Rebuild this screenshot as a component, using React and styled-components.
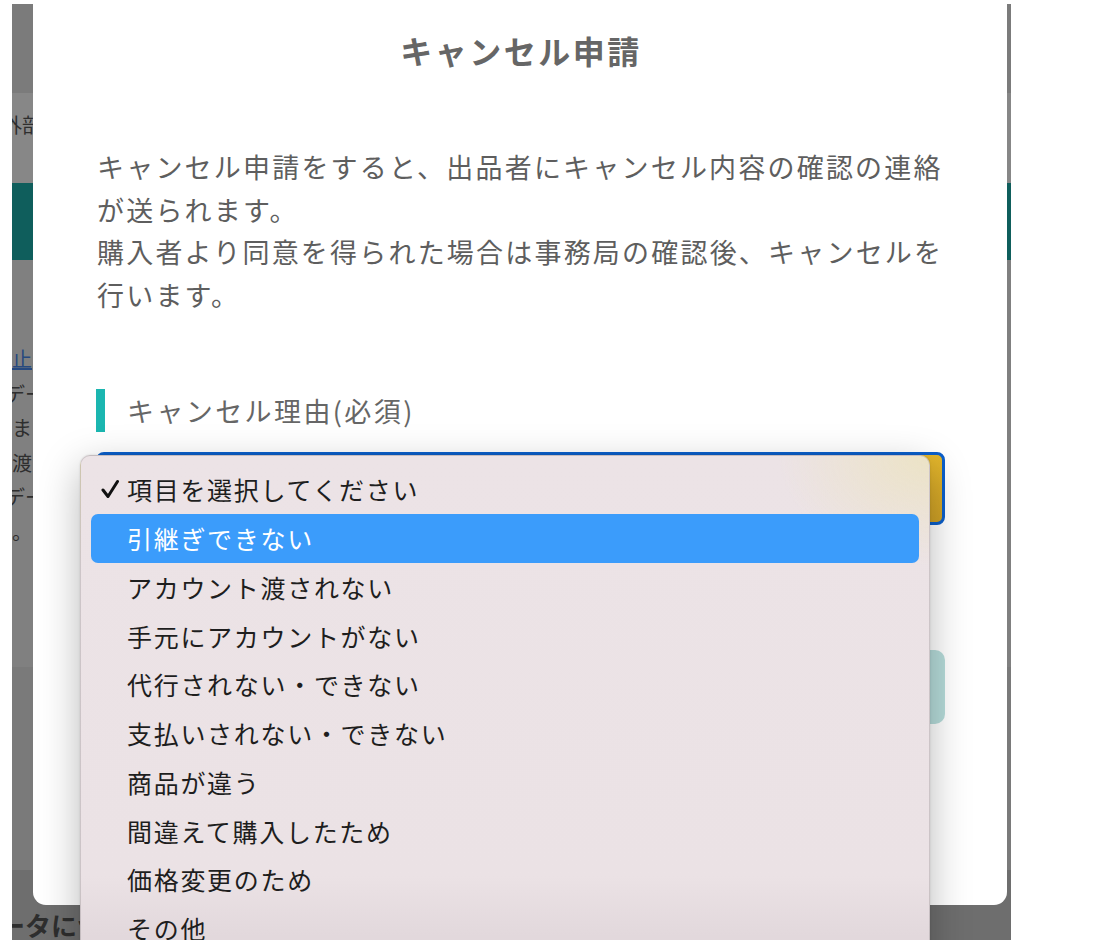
import React from "react";
import styled, { createGlobalStyle } from "styled-components";

const GlobalStyle = createGlobalStyle`
  html, body {
    margin: 0;
    padding: 0;
    background: #ffffff;
    overflow: hidden;
  }
  body {
    font-family: "Noto Sans CJK JP", "Noto Sans", sans-serif;
  }
`;

const Screen = styled.div`
  position: relative;
  width: 1100px;
  height: 940px;
  overflow: hidden;
  background: #ffffff;
`;

// dimmed page behind the modal
const Page = styled.div`
  display: flex;
  flex-direction: column;
  margin: 4px 0 0 12px;
  width: 999px;
  height: 936px;
  overflow: hidden;
  background: #808080;
`;

const Band = styled.div`
  flex: ${(props) => (props.$h ? `0 0 ${props.$h}px` : "1 1 auto")};
  background: ${(props) => props.$bg};
  padding-top: ${(props) => props.$pt || 0}px;
  box-sizing: border-box;
`;

const DimText = styled.div`
  font-size: ${(props) => props.$size || 20}px;
  line-height: ${(props) => props.$lh || 34.5}px;
  font-weight: ${(props) => (props.$bold ? 700 : 400)};
  color: #2e2e2e;
  white-space: nowrap;
  text-indent: ${(props) => props.$indent || 0}px;
`;

const DimLink = styled.span`
  color: #27497f;
  text-decoration: underline;
`;

const Modal = styled.div`
  position: absolute;
  left: 33px;
  top: 0;
  width: 974px;
  height: 905px;
  box-sizing: border-box;
  padding: 28px 62px 0 64px;
  background: #ffffff;
  border-radius: 0 0 13px 13px;
  display: flex;
  flex-direction: column;
`;

const Title = styled.h2`
  margin: 0;
  font-size: 32px;
  line-height: 45px;
  font-weight: 700;
  letter-spacing: 2.5px;
  text-align: center;
  color: #666666;
`;

const Lead = styled.p`
  margin: 73px 0 0;
  font-size: 27px;
  line-height: 42.5px;
  letter-spacing: 2.2px;
  color: #5e5e5e;
`;

const FieldLabel = styled.div`
  margin-top: 73px;
  height: 43px;
  display: flex;
  align-items: center;
  border-left: 9px solid #1bb6b0;
  padding-left: 22px;
  margin-left: -1px;
  font-size: 27px;
  letter-spacing: 2.4px;
  color: #666666;
`;

const SelectBox = styled.div`
  margin-top: 20px;
  height: 73px;
  box-sizing: border-box;
  border: 3px solid #0b5fcb;
  border-radius: 8px;
  margin-left: -1px;
  background: linear-gradient(to bottom, #e3b62c, #cfa126);
`;

const SubmitButton = styled.div`
  margin-top: 125px;
  height: 74px;
  border-radius: 10px;
  background: #b6dcda;
`;

const Menu = styled.div`
  position: absolute;
  left: 80px;
  top: 455px;
  width: 850px;
  height: 520px;
  box-sizing: border-box;
  padding: 9px 10px 0;
  border: 1px solid rgba(0, 0, 0, 0.13);
  border-radius: 10px;
  background:
    radial-gradient(ellipse 150px 110px at 100% 0, rgba(236, 227, 196, 0.95), rgba(236, 227, 196, 0) 100%),
    linear-gradient(to bottom, #ece3e6 0, #ebe2e5 420px, #e2d8dc 480px);
  box-shadow: 0 12px 40px rgba(0, 0, 0, 0.28), 0 0 2px rgba(0, 0, 0, 0.15);
`;

const MenuItem = styled.div`
  height: 48.75px;
  display: flex;
  align-items: center;
  padding-left: 10px;
  border-radius: 7px;
  font-size: 25px;
  letter-spacing: 1.7px;
  color: ${(props) => (props.$active ? "#ffffff" : "#1e1e1e")};
  background: ${(props) => (props.$active ? "#3b9cfb" : "transparent")};
`;

const CheckSlot = styled.span`
  flex: 0 0 26px;
  display: flex;
  align-items: center;
`;

const Check = () => (
  <svg width="18" height="20" viewBox="0 0 18 20">
    <path
      d="M2 11 L7 17.5 L16.5 2.5"
      fill="none"
      stroke="#111"
      strokeWidth="3"
      strokeLinecap="round"
      strokeLinejoin="round"
    />
  </svg>
);

const reasons = [
  "項目を選択してください",
  "引継ぎできない",
  "アカウント渡されない",
  "手元にアカウントがない",
  "代行されない・できない",
  "支払いされない・できない",
  "商品が違う",
  "間違えて購入したため",
  "価格変更のため",
  "その他",
];

export default function App() {
  return (
    <Screen>
      <GlobalStyle />
      <Page>
        <Band $h={89} $bg="#7b7b7b" />
        <Band $h={90} $bg="#878787" $pt={18}>
          <DimText $lh={28} $indent={-10}>外部サービスとの連携</DimText>
        </Band>
        <Band $h={77} $bg="#0f5e5c" />
        <Band $h={407} $bg="#808080" $pt={82}>
          <DimText>
            <DimLink>止</DimLink>
          </DimText>
          <DimText $indent={-7}>データの引継ぎについて</DimText>
          <DimText>ます。</DimText>
          <DimText>渡</DimText>
          <DimText $indent={-7}>データの確認</DimText>
          <DimText>。</DimText>
        </Band>
        <Band $h={203} $bg="#7a7a7a" />
        <Band $bg="#6e6e6e" $pt={37}>
          <DimText $size={26} $lh={36} $bold $indent={-39}>
            データについて
          </DimText>
        </Band>
      </Page>

      <Modal>
        <Title>キャンセル申請</Title>
        <Lead>
          キャンセル申請をすると、出品者にキャンセル内容の確認の連絡が送られます。
          <br />
          購入者より同意を得られた場合は事務局の確認後、キャンセルを行います。
        </Lead>
        <FieldLabel>キャンセル理由(必須)</FieldLabel>
        <SelectBox />
        <SubmitButton />
      </Modal>

      <Menu>
        {reasons.map((r, i) => (
          <MenuItem key={r} $active={i === 1}>
            <CheckSlot>{i === 0 && <Check />}</CheckSlot>
            {r}
          </MenuItem>
        ))}
      </Menu>
    </Screen>
  );
}
